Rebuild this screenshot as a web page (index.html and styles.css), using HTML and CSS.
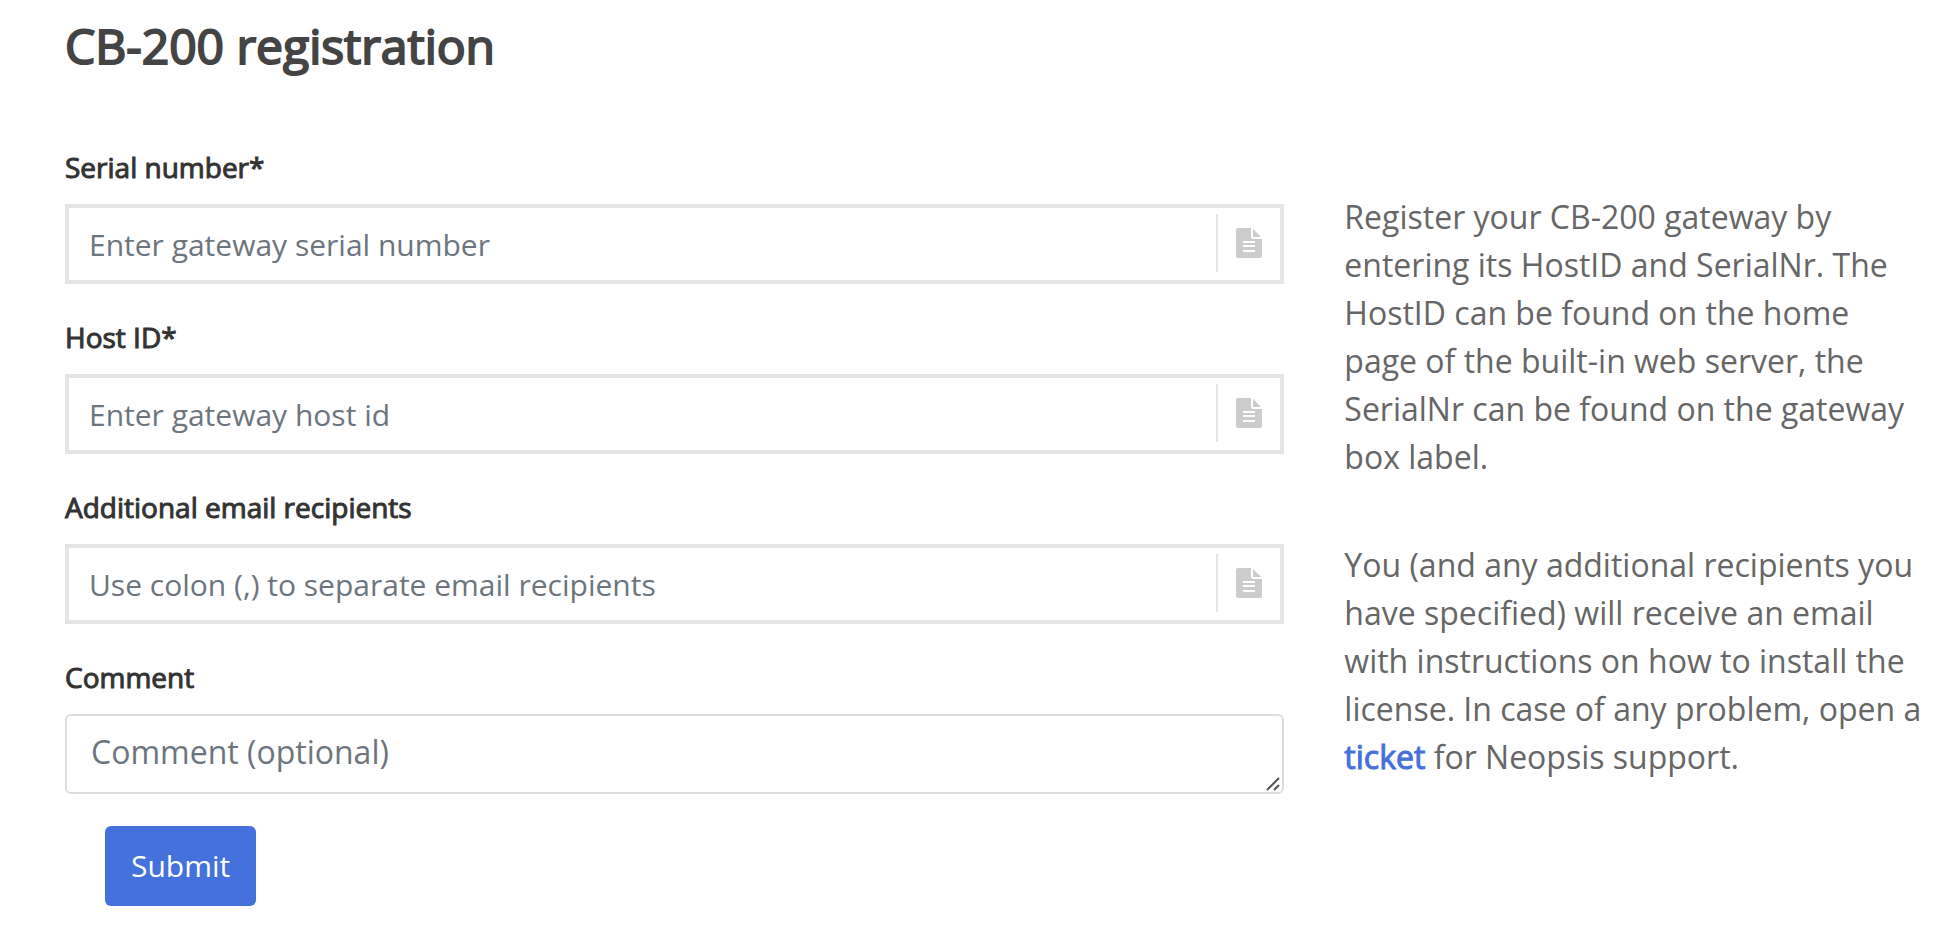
FILE: index.html
```html
<!DOCTYPE html>
<html lang="en">
<head>
    <meta charset="UTF-8">
    <meta name="viewport" content="width=device-width, initial-scale=1.0">
    <title>CB-200 registration</title>
    <link rel="stylesheet" href="styles.css">
</head>
<body>
    <svg class="sprite" aria-hidden="true">
        <symbol id="icon-file" viewBox="0 0 26 30">
            <path d="M2 0H15V9a2 2 0 0 0 2 2H26V28a2 2 0 0 1-2 2H2a2 2 0 0 1-2-2V2a2 2 0 0 1 2-2Z"/>
            <path d="M17 1L25 9H17Z"/>
            <path class="lines" d="M7 14H19M7 18H19M7 23H19"/>
        </symbol>
    </svg>

    <main class="page">
        <h1>CB-200 registration</h1>
        <div class="row">
            <form class="col">
                <div class="form-group">
                    <label for="serial">Serial number*</label>
                    <div class="input-box">
                        <input type="text" id="serial" placeholder="Enter gateway serial number" required>
                        <span class="addon"><svg class="icon"><use href="#icon-file"/></svg></span>
                    </div>
                </div>

                <div class="form-group">
                    <label for="hostid">Host ID*</label>
                    <div class="input-box">
                        <input type="text" id="hostid" placeholder="Enter gateway host id" required>
                        <span class="addon"><svg class="icon"><use href="#icon-file"/></svg></span>
                    </div>
                </div>

                <div class="form-group">
                    <label for="recipients">Additional email recipients</label>
                    <div class="input-box">
                        <input type="text" id="recipients" placeholder="Use colon (,) to separate email recipients">
                        <span class="addon"><svg class="icon"><use href="#icon-file"/></svg></span>
                    </div>
                </div>

                <div class="form-group">
                    <label for="comment">Comment</label>
                    <div class="comment-box">
                        <textarea id="comment" rows="1" placeholder="Comment (optional)"></textarea>
                        <svg class="grip" viewBox="0 0 14 14"><path d="M1 13L13 1M8 13L13 8"/></svg>
                    </div>
                </div>

                <button type="submit">Submit</button>
            </form>

            <div class="col info">
                <p>Register your CB-200 gateway by entering its HostID and SerialNr. The HostID can be found on the home page of the built-in web server, the SerialNr can be found on the gateway box label.</p>
                <p>You (and any additional recipients you have specified) will receive an email with instructions on how to install the license. In case of any problem, open a <a href="#">ticket</a> for Neopsis support.</p>
            </div>
        </div>
    </main>
</body>
</html>
```
FILE: styles.css
```css
* {
    box-sizing: border-box;
}
body {
    margin: 0;
    background-color: #ffffff;
    color: #666666;
    font-family: "Open Sans", "Noto Sans", sans-serif;
    font-size: 32px;
    line-height: 48px;
}
.sprite {
    display: none;
}
.page {
    padding: 16px 0 24px 35px;
}
h1 {
    margin: 0 30px 70px;
    color: #444444;
    font-size: 48px;
    font-weight: 400;
    line-height: 60px;
    -webkit-text-stroke: 2px #444444;
}
.row {
    display: grid;
    grid-template-columns: minmax(0, 2fr) minmax(0, 1fr);
}
.col {
    padding: 0 30px;
}
.form-group {
    margin-bottom: 32px;
}
label {
    display: block;
    margin-bottom: 16px;
    color: #333333;
    font-size: 28px;
    line-height: 42px;
    -webkit-text-stroke: 1px #333333;
}
.input-box {
    display: flex;
    height: 80px;
    border: 4px solid #e5e5e5;
}
input, textarea, button {
    font-family: inherit;
}
input {
    flex: 1;
    min-width: 0;
    padding: 0 20px;
    border: none;
    background: none;
    color: #444444;
    font-size: 30px;
}
input::placeholder, textarea::placeholder {
    color: #6c757d;
    opacity: 1;
}
.addon {
    display: flex;
    align-items: center;
    justify-content: center;
    width: 64px;
    margin: 6px 0 8px;
    border-left: 2px solid #e5e5e5;
}
.icon {
    width: 26px;
    height: 30px;
    fill: #cccccc;
}
.lines {
    stroke: #ffffff;
    stroke-width: 2;
}
.comment-box {
    position: relative;
}
textarea {
    display: block;
    width: 100%;
    height: 80px;
    padding: 12px 24px;
    border: 2px solid #dddddd;
    border-radius: 6px;
    color: #444444;
    font-size: 32px;
    line-height: 48px;
    resize: vertical;
}
textarea::-webkit-resizer {
    display: none;
}
/* drag handle drawn over the corner of the textarea */
.grip {
    position: absolute;
    right: 4px;
    bottom: 3px;
    width: 14px;
    height: 14px;
    stroke: #555555;
    stroke-width: 2;
    pointer-events: none;
}
button {
    display: block;
    height: 80px;
    margin-left: 40px;
    padding: 0 26px;
    border: none;
    border-radius: 6px;
    background-color: #4471db;
    color: #ffffff;
    font-size: 30px;
    line-height: 40px;
    cursor: pointer;
}
button:hover {
    background-color: #2a5bd0;
}
.info {
    padding-top: 47px;
}
.info p {
    margin: 0 0 60px;
}
.info a {
    color: #4471db;
    text-decoration: none;
    -webkit-text-stroke: 1px #4471db;
}
```
